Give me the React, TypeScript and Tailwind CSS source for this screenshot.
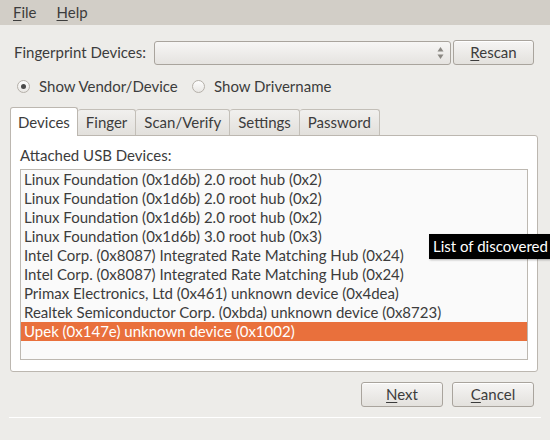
import React from 'react';

const devices = [
  'Linux Foundation (0x1d6b) 2.0 root hub (0x2)',
  'Linux Foundation (0x1d6b) 2.0 root hub (0x2)',
  'Linux Foundation (0x1d6b) 2.0 root hub (0x2)',
  'Linux Foundation (0x1d6b) 3.0 root hub (0x3)',
  'Intel Corp. (0x8087) Integrated Rate Matching Hub (0x24)',
  'Intel Corp. (0x8087) Integrated Rate Matching Hub (0x24)',
  'Primax Electronics, Ltd (0x461) unknown device (0x4dea)',
  'Realtek Semiconductor Corp. (0xbda) unknown device (0x8723)',
  'Upek (0x147e) unknown device (0x1002)',
];

const tabs = ['Devices', 'Finger', 'Scan/Verify', 'Settings', 'Password'];

const btn =
  'h-[25px] rounded-[3px] border border-[#a9a49d] bg-gradient-to-b from-[#f6f5f4] to-[#e3e1dd] shadow-[inset_0_1px_0_#fff] text-[#3c3c3c] flex items-center justify-center';

function Radio({ checked }: { checked?: boolean }) {
  return (
    <span className="w-[13px] h-[13px] rounded-full border border-[#b5b0a9] bg-gradient-to-b from-[#fdfdfd] to-[#e9e7e4] flex items-center justify-center">
      {checked && <span className="w-[5px] h-[5px] rounded-full bg-[#4a4a4a]" />}
    </span>
  );
}

export default function App() {
  return (
    <div
      className="w-[550px] h-[440px] bg-[#edece9] text-[#3c3c3c] text-[15px] relative overflow-hidden"
      style={{ fontFamily: 'Lato, "Liberation Sans", sans-serif' }}
    >
      {/* Menu bar */}
      <div className="h-[25px] bg-[#d2cec7] flex items-center gap-[20px] pl-[13px] pb-[1px]">
        <span>
          <u className="underline-offset-2">F</u>ile
        </span>
        <span>
          <u className="underline-offset-2">H</u>elp
        </span>
      </div>

      {/* Device selector */}
      <div className="flex items-center mt-[15px] pl-[14px]">
        <span className="w-[140px]">Fingerprint Devices:</span>
        <div className="w-[297px] h-[24px] rounded-[3px] border border-[#a9a49d] bg-gradient-to-b from-[#f7f6f5] to-[#e5e3e0] flex items-center justify-end pr-[6px]">
          <svg width="7" height="14" viewBox="0 0 7 14">
            <path d="M3.5 1 L6.5 5.5 L0.5 5.5 Z" fill="#8a8782" />
            <path d="M3.5 13 L6.5 8.5 L0.5 8.5 Z" fill="#8a8782" />
          </svg>
        </div>
        <button className={`${btn} w-[81px] ml-[2px]`}>
          <span>
            <u className="underline-offset-2">R</u>escan
          </span>
        </button>
      </div>

      {/* Radios */}
      <div className="flex items-center mt-[12px] pl-[17px] h-[18px]">
        <Radio checked />
        <span className="ml-[9px] w-[153px]">Show Vendor/Device</span>
        <Radio />
        <span className="ml-[9px]">Show Drivername</span>
      </div>

      {/* Notebook */}
      <div className="mx-[10px] mt-[12px] w-[528px]">
        <div className="flex items-end h-[28px]">
          {tabs.map((t, i) =>
            i === 0 ? (
              <div
                key={t}
                className="h-[29px] px-[7px] bg-white border border-b-0 border-[#bcb7b0] rounded-t-[3px] flex items-center -mb-px relative z-10"
              >
                {t}
              </div>
            ) : (
              <div
                key={t}
                className="h-[26px] px-[8px] bg-gradient-to-b from-[#f1f0ee] to-[#e2e0dc] border border-b-0 border-l-0 border-[#c3bfb8] rounded-t-[3px] flex items-center"
              >
                {t}
              </div>
            ),
          )}
        </div>
        <div className="h-[237px] bg-white border border-[#bcb7b0] rounded-b-[3px] rounded-tr-[3px] px-[9px] pt-[9px]">
          <div className="h-[20px] flex items-center">Attached USB Devices:</div>
          <div className="mt-[4px] h-[191px] border border-[#bdb8b1] bg-[#fafafa]">
            {devices.map((d, i) => (
              <div
                key={i}
                className={`h-[19px] flex items-center pl-[3px] whitespace-nowrap ${
                  i === devices.length - 1 ? 'bg-[#e9703c] text-white' : ''
                }`}
              >
                {d}
              </div>
            ))}
          </div>
        </div>
      </div>

      {/* Buttons */}
      <div className="flex justify-end gap-[9px] mt-[10px] pr-[16px]">
        <button className={`${btn} w-[82px]`}>
          <span>
            <u className="underline-offset-2">N</u>ext
          </span>
        </button>
        <button className={`${btn} w-[82px]`}>
          <span>
            <u className="underline-offset-2">C</u>ancel
          </span>
        </button>
      </div>

      <div className="mx-[9px] mt-[10px] h-px bg-[#cfcbc5] border-b border-white" />

      {/* Tooltip */}
      <div className="absolute left-[429px] top-[234px] h-[25px] pl-[4px] pr-[8px] bg-black text-white flex items-center whitespace-nowrap shadow-[1px_1px_2px_rgba(0,0,0,0.3)]">
        List of discovered devices
      </div>
    </div>
  );
}
